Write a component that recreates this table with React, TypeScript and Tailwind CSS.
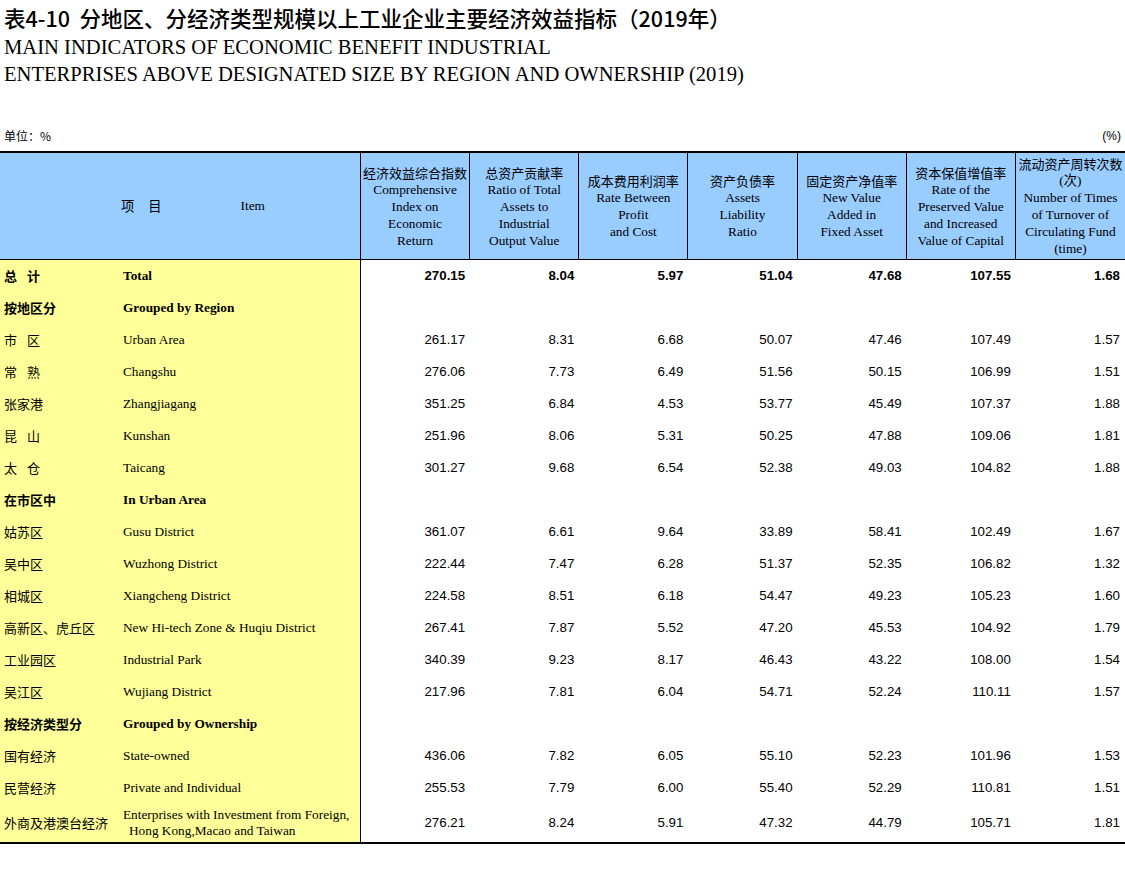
import React from "react";

type Row = {
  cn: string;
  en: React.ReactNode;
  bold?: boolean;
  v?: string[];
  tall?: boolean;
};

const rows: Row[] = [
  { cn: "总 计", en: "Total", bold: true, v: ["270.15", "8.04", "5.97", "51.04", "47.68", "107.55", "1.68"] },
  { cn: "按地区分", en: "Grouped by Region", bold: true },
  { cn: "市 区", en: "Urban Area", v: ["261.17", "8.31", "6.68", "50.07", "47.46", "107.49", "1.57"] },
  { cn: "常 熟", en: "Changshu", v: ["276.06", "7.73", "6.49", "51.56", "50.15", "106.99", "1.51"] },
  { cn: "张家港", en: "Zhangjiagang", v: ["351.25", "6.84", "4.53", "53.77", "45.49", "107.37", "1.88"] },
  { cn: "昆 山", en: "Kunshan", v: ["251.96", "8.06", "5.31", "50.25", "47.88", "109.06", "1.81"] },
  { cn: "太 仓", en: "Taicang", v: ["301.27", "9.68", "6.54", "52.38", "49.03", "104.82", "1.88"] },
  { cn: "在市区中", en: "In Urban Area", bold: true },
  { cn: "姑苏区", en: "Gusu District", v: ["361.07", "6.61", "9.64", "33.89", "58.41", "102.49", "1.67"] },
  { cn: "吴中区", en: "Wuzhong District", v: ["222.44", "7.47", "6.28", "51.37", "52.35", "106.82", "1.32"] },
  { cn: "相城区", en: "Xiangcheng District", v: ["224.58", "8.51", "6.18", "54.47", "49.23", "105.23", "1.60"] },
  { cn: "高新区、虎丘区", en: "New Hi-tech Zone & Huqiu District", v: ["267.41", "7.87", "5.52", "47.20", "45.53", "104.92", "1.79"] },
  { cn: "工业园区", en: "Industrial Park", v: ["340.39", "9.23", "8.17", "46.43", "43.22", "108.00", "1.54"] },
  { cn: "吴江区", en: "Wujiang District", v: ["217.96", "7.81", "6.04", "54.71", "52.24", "110.11", "1.57"] },
  { cn: "按经济类型分", en: "Grouped by Ownership", bold: true },
  { cn: "国有经济", en: "State-owned", v: ["436.06", "7.82", "6.05", "55.10", "52.23", "101.96", "1.53"] },
  { cn: "民营经济", en: "Private and Individual", v: ["255.53", "7.79", "6.00", "55.40", "52.29", "110.81", "1.51"] },
  {
    cn: "外商及港澳台经济",
    en: (
      <span className="block leading-[16px]">
        <span className="block">Enterprises with Investment from Foreign,</span>
        <span className="block pl-[6px]">Hong Kong,Macao and Taiwan</span>
      </span>
    ),
    v: ["276.21", "8.24", "5.91", "47.32", "44.79", "105.71", "1.81"],
    tall: true,
  },
];

const headers: { cn: string; en: string[] }[] = [
  { cn: "经济效益综合指数", en: ["Comprehensive", "Index on", "Economic", "Return"] },
  { cn: "总资产贡献率", en: ["Ratio of Total", "Assets to", "Industrial", "Output Value"] },
  { cn: "成本费用利润率", en: ["Rate Between", "Profit", "and Cost"] },
  { cn: "资产负债率", en: ["Assets", "Liability", "Ratio"] },
  { cn: "固定资产净值率", en: ["New Value", "Added in", "Fixed Asset"] },
  { cn: "资本保值增值率", en: ["Rate of the", "Preserved Value", "and Increased", "Value of Capital"] },
  { cn: "流动资产周转次数", en: ["(次)", "Number of Times", "of Turnover of", "Circulating Fund", "(time)"] },
];

export default function App() {
  return (
    <div className="w-[1125px] h-[876px] bg-white text-black overflow-hidden">
      {/* Titles */}
      <div className="pl-[4px]">
        <div className="h-[34px] leading-[36px] text-[21.5px] font-medium font-['Noto_Sans_CJK_SC',sans-serif] whitespace-pre">
          表4-10  分地区、分经济类型规模以上工业企业主要经济效益指标（2019年）
        </div>
        <div className="font-['Liberation_Serif',serif] text-[20.6px] leading-[27px]">
          <div>MAIN INDICATORS OF ECONOMIC BENEFIT INDUSTRIAL</div>
          <div>ENTERPRISES ABOVE DESIGNATED SIZE BY REGION AND OWNERSHIP (2019)</div>
        </div>
      </div>

      {/* Unit row */}
      <div className="mt-[38px] h-[20px] flex items-center justify-between pl-[4px] pr-[4px] text-[12px]">
        <span className="font-['Noto_Sans_CJK_SC',sans-serif]">单位：%</span>
        <span className="font-['Liberation_Sans',sans-serif]">(%)</span>
      </div>

      {/* Table */}
      <div className="mt-[5px] border-t-2 border-b-2 border-black">
        {/* Header */}
        <div className="grid grid-cols-[361px_repeat(7,1fr)] h-[107px] bg-[#99ccff] border-b border-black">
          <div className="border-r border-black flex items-center font-['Liberation_Serif','Noto_Sans_CJK_SC',serif] text-[13.3px]">
            <span className="ml-[121px] font-['Noto_Sans_CJK_SC',sans-serif]">项</span>
            <span className="ml-[14px] font-['Noto_Sans_CJK_SC',sans-serif]">目</span>
            <span className="ml-[79px]">Item</span>
          </div>
          {headers.map((h, i) => (
            <div
              key={i}
              className={`flex flex-col items-center justify-center text-center leading-[17px] ${
                i < headers.length - 1 ? "border-r border-black" : ""
              }`}
            >
              <div className="text-[13px] font-['Noto_Sans_CJK_SC',sans-serif] whitespace-nowrap">{h.cn}</div>
              {h.en.map((e, j) => (
                <div key={j} className="text-[13.3px] font-['Liberation_Serif','Noto_Sans_CJK_SC',serif] whitespace-nowrap">
                  {e}
                </div>
              ))}
            </div>
          ))}
        </div>

        {/* Body */}
        {rows.map((r, i) => (
          <div
            key={i}
            className={`grid grid-cols-[361px_repeat(7,1fr)] ${r.tall ? "h-[38px]" : "h-[32px]"}`}
          >
            <div className={`bg-[#ffff99] border-r border-black flex items-center pl-[4px] ${r.bold ? "font-bold" : ""}`}>
              <span className="w-[119px] shrink-0 text-[13px] font-['Noto_Sans_CJK_SC',sans-serif] whitespace-pre [word-spacing:7px]">
                {r.cn}
              </span>
              <span className="text-[13.3px] font-['Liberation_Serif',serif] whitespace-nowrap">{r.en}</span>
            </div>
            {Array.from({ length: 7 }).map((_, j) => (
              <div
                key={j}
                className={`flex items-center justify-end pr-[5px] text-[13.3px] font-['Liberation_Sans',sans-serif] ${
                  r.bold ? "font-bold" : ""
                }`}
              >
                {r.v ? r.v[j] : ""}
              </div>
            ))}
          </div>
        ))}
      </div>
    </div>
  );
}
